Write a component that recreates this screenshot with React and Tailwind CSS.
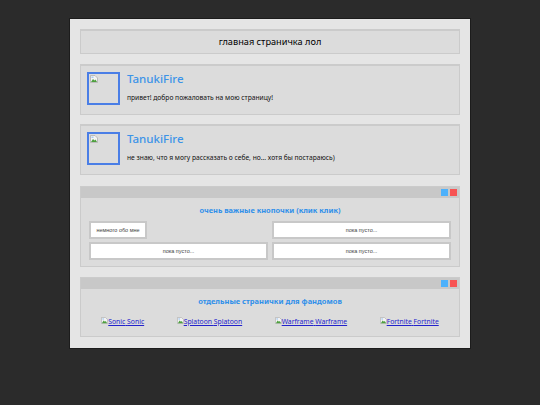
function BrokenIcon({ className = "" }) {
  return (
    <svg viewBox="0 0 16 16" className={className} aria-hidden="true">
      <path d="M1 1h9l5 5v9H1z" fill="#f4f4f4" stroke="#a8a8a8" strokeWidth="1.4" />
      <path d="M2 14l4-6 3 3 2-2 3 5z" fill="#4f9f3f" />
      <path d="M3 3h4v3H3z" fill="#a9cbf0" />
    </svg>
  );
}

function Profile({ text }) {
  return (
    <div className="h-[51px] flex items-start bg-[#dcdcdc] border border-[#cbcbcb] border-t-2 pl-[6px] pt-[6px]">
      <div className="w-[33px] h-[33px] border-2 border-[#4a7ee6] shrink-0 pl-px pt-px">
        <BrokenIcon className="w-2 h-2" />
      </div>
      <div className="ml-[7px]">
        <div className="text-[#3b93e8] text-[11.5px] font-medium leading-[13px] font-['Noto_Sans',sans-serif]">TanukiFire</div>
        <div className="mt-[8px] text-[6.7px] leading-[10px] text-[#111] font-['Noto_Sans',sans-serif] whitespace-nowrap">{text}</div>
      </div>
    </div>
  );
}

function WinHead() {
  return (
    <div className="h-[11px] bg-[#c8c8c8] flex items-center justify-end gap-[2px] pr-[2px]">
      <span className="w-[7px] h-[7px] bg-[#4db1fb]" />
      <span className="w-[7px] h-[7px] bg-[#f75353]" />
    </div>
  );
}

function Btn({ children, className = "" }) {
  return (
    <button className={`block w-full h-[18px] bg-white border-2 border-[#c8c8c8] text-[5.5px] text-[#444] font-['Liberation_Sans',sans-serif] ${className}`}>
      {children}
    </button>
  );
}

function Fandom({ name }) {
  return (
    <a href="#" className="flex items-center text-[#2222cc] underline text-[6.8px] leading-[10px] font-['Noto_Sans',sans-serif] whitespace-nowrap">
      <BrokenIcon className="w-[7px] h-[7px] mb-[3px]" />
      {name} {name}
    </a>
  );
}

export default function App() {
  return (
    <div className="w-[540px] h-[405px] overflow-hidden bg-[#2b2b2b] pt-[18px]">
      <div className="w-[402px] h-[331px] ml-[69px] bg-[#e5e5e5] border border-[#1c1c1c] pt-[10px] px-[10px] flex flex-col">
        <div className="h-[25px] shrink-0 bg-[#dcdcdc] border border-[#cbcbcb] border-t-2 flex items-center justify-center text-[9.2px] text-black font-['Noto_Sans',sans-serif]">
          главная страничка лол
        </div>
        <div className="mt-[10px]">
          <Profile text="привет! добро пожаловать на мою страницу!" />
        </div>
        <div className="mt-[9px]">
          <Profile text="не знаю, что я могу рассказать о себе, но... хотя бы постараюсь)" />
        </div>
        <div className="mt-[11px] h-[81px] bg-[#dcdcdc] border border-[#cbcbcb]">
          <WinHead />
          <div className="text-center text-[#2f8fea] text-[7.4px] font-bold leading-[10px] mt-[7px] font-['Noto_Sans',sans-serif]">
            очень важные кнопочки (клик клик)
          </div>
          <div className="mt-[6px] mx-[8px] grid grid-cols-2 gap-x-[4px] gap-y-[3px]">
            <div><Btn className="!w-[58px]">немного обо мне</Btn></div>
            <Btn>пока пусто...</Btn>
            <Btn>пока пусто...</Btn>
            <Btn>пока пусто...</Btn>
          </div>
        </div>
        <div className="mt-[10px] h-[60px] bg-[#dcdcdc] border border-[#cbcbcb]">
          <WinHead />
          <div className="text-center text-[#2f8fea] text-[7.5px] font-bold leading-[10px] mt-[7px] font-['Noto_Sans',sans-serif]">
            отдельные странички для фандомов
          </div>
          <div className="mt-[11px] flex justify-around px-[4px]">
            <Fandom name="Sonic" />
            <Fandom name="Splatoon" />
            <Fandom name="Warframe" />
            <Fandom name="Fortnite" />
          </div>
        </div>
      </div>
    </div>
  );
}
